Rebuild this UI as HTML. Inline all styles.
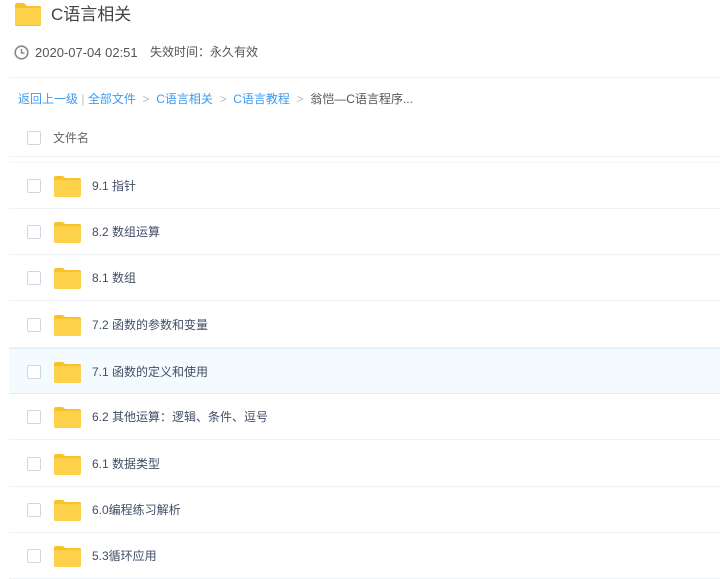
<!DOCTYPE html>
<html><head><meta charset="utf-8"><style>
*{margin:0;padding:0;box-sizing:border-box}
body{width:720px;height:572px;overflow:hidden;background:#fff;font-family:"Liberation Sans","Noto Sans CJK SC",sans-serif;color:#333;position:relative}
.abs{position:absolute}
.cb{position:absolute;left:27px;width:14px;height:14px;border:1px solid #cfd6df;border-radius:2px;background:#fff}
.row{position:absolute;left:9px;right:0;height:46px;border-bottom:1px solid #f0f2f5}
.row .t{position:absolute;left:83px;top:0;line-height:46px;font-size:12px;color:#424e67}
.row .cb{left:18px;top:16px}
.row svg{position:absolute;left:45px;top:13px}
.hl{background:#f4fbff;border-top:1px solid #dcefff;border-bottom:1px solid #dcefff}
.bc{color:#3b9bf0}
</style></head><body>
<svg class="abs" style="left:14px;top:3px" width="28" height="23" viewBox="0 0 28 23"><path d="M1 2a2 2 0 0 1 2-2h7l3 3h12a2 2 0 0 1 2 2v16a2 2 0 0 1-2 2H3a2 2 0 0 1-2-2z" fill="#f9c22b"/><rect x="1" y="5" width="26" height="17" rx="2" fill="#fdd14a"/></svg>
<div class="abs" style="left:51px;top:4px;font-size:17px;line-height:22px;color:#444">C语言相关</div>
<svg class="abs" style="left:14px;top:45px" width="15" height="15" viewBox="0 0 15 15"><circle cx="7.5" cy="7.5" r="6.3" fill="none" stroke="#888" stroke-width="1.6"/><path d="M7.5 4v4h3" fill="none" stroke="#888" stroke-width="1.5"/></svg>
<div class="abs" style="left:35px;top:44px;font-size:13px;line-height:17px;color:#555">2020-07-04 02:51</div>
<div class="abs" style="left:150px;top:44px;font-size:12px;line-height:17px;color:#555">失效时间：永久有效</div>
<div class="abs" style="left:9px;right:0;top:77px;border-top:1px solid #f0f2f5"></div>
<div class="abs" style="left:18px;top:91px;font-size:12px;line-height:17px;color:#555;white-space:nowrap"><span class="bc">返回上一级</span> <span style="color:#bbb">|</span> <span class="bc">全部文件</span> <span style="color:#bbb">&nbsp;&gt;&nbsp;</span> <span class="bc">C语言相关</span> <span style="color:#bbb">&nbsp;&gt;&nbsp;</span> <span class="bc">C语言教程</span> <span style="color:#bbb">&nbsp;&gt;&nbsp;</span> 翁恺—C语言程序...</div>
<div class="cb" style="top:131px"></div>
<div class="abs" style="left:53px;top:130px;font-size:12px;line-height:17px;color:#666">文件名</div>
<div class="abs" style="left:9px;right:0;top:156px;border-top:1px solid #f0f2f5"></div>
<div class="abs" style="left:9px;right:0;top:162px;border-top:1px solid #f5f6f8"></div>
<div class="row" style="top:163px"><div class="cb"></div><svg width="27" height="21" viewBox="0 0 27 21"><path d="M0 2a2 2 0 0 1 2-2h7l2 2h14a2 2 0 0 1 2 2v15a2 2 0 0 1-2 2H2a2 2 0 0 1-2-2z" fill="#f9c22b"/><rect x="0" y="4" width="27" height="17" rx="2" fill="#fdd14a"/></svg><div class="t">9.1 指针</div></div>
<div class="row" style="top:209px"><div class="cb"></div><svg width="27" height="21" viewBox="0 0 27 21"><path d="M0 2a2 2 0 0 1 2-2h7l2 2h14a2 2 0 0 1 2 2v15a2 2 0 0 1-2 2H2a2 2 0 0 1-2-2z" fill="#f9c22b"/><rect x="0" y="4" width="27" height="17" rx="2" fill="#fdd14a"/></svg><div class="t">8.2 数组运算</div></div>
<div class="row" style="top:255px"><div class="cb"></div><svg width="27" height="21" viewBox="0 0 27 21"><path d="M0 2a2 2 0 0 1 2-2h7l2 2h14a2 2 0 0 1 2 2v15a2 2 0 0 1-2 2H2a2 2 0 0 1-2-2z" fill="#f9c22b"/><rect x="0" y="4" width="27" height="17" rx="2" fill="#fdd14a"/></svg><div class="t">8.1 数组</div></div>
<div class="row" style="top:302px"><div class="cb"></div><svg width="27" height="21" viewBox="0 0 27 21"><path d="M0 2a2 2 0 0 1 2-2h7l2 2h14a2 2 0 0 1 2 2v15a2 2 0 0 1-2 2H2a2 2 0 0 1-2-2z" fill="#f9c22b"/><rect x="0" y="4" width="27" height="17" rx="2" fill="#fdd14a"/></svg><div class="t">7.2 函数的参数和变量</div></div>
<div class="row hl" style="top:348px"><div class="cb"></div><svg width="27" height="21" viewBox="0 0 27 21"><path d="M0 2a2 2 0 0 1 2-2h7l2 2h14a2 2 0 0 1 2 2v15a2 2 0 0 1-2 2H2a2 2 0 0 1-2-2z" fill="#f9c22b"/><rect x="0" y="4" width="27" height="17" rx="2" fill="#fdd14a"/></svg><div class="t">7.1 函数的定义和使用</div></div>
<div class="row" style="top:394px"><div class="cb"></div><svg width="27" height="21" viewBox="0 0 27 21"><path d="M0 2a2 2 0 0 1 2-2h7l2 2h14a2 2 0 0 1 2 2v15a2 2 0 0 1-2 2H2a2 2 0 0 1-2-2z" fill="#f9c22b"/><rect x="0" y="4" width="27" height="17" rx="2" fill="#fdd14a"/></svg><div class="t">6.2 其他运算：逻辑、条件、逗号</div></div>
<div class="row" style="top:441px"><div class="cb"></div><svg width="27" height="21" viewBox="0 0 27 21"><path d="M0 2a2 2 0 0 1 2-2h7l2 2h14a2 2 0 0 1 2 2v15a2 2 0 0 1-2 2H2a2 2 0 0 1-2-2z" fill="#f9c22b"/><rect x="0" y="4" width="27" height="17" rx="2" fill="#fdd14a"/></svg><div class="t">6.1 数据类型</div></div>
<div class="row" style="top:487px"><div class="cb"></div><svg width="27" height="21" viewBox="0 0 27 21"><path d="M0 2a2 2 0 0 1 2-2h7l2 2h14a2 2 0 0 1 2 2v15a2 2 0 0 1-2 2H2a2 2 0 0 1-2-2z" fill="#f9c22b"/><rect x="0" y="4" width="27" height="17" rx="2" fill="#fdd14a"/></svg><div class="t">6.0编程练习解析</div></div>
<div class="row" style="top:533px"><div class="cb"></div><svg width="27" height="21" viewBox="0 0 27 21"><path d="M0 2a2 2 0 0 1 2-2h7l2 2h14a2 2 0 0 1 2 2v15a2 2 0 0 1-2 2H2a2 2 0 0 1-2-2z" fill="#f9c22b"/><rect x="0" y="4" width="27" height="17" rx="2" fill="#fdd14a"/></svg><div class="t">5.3循环应用</div></div>
</body></html>
